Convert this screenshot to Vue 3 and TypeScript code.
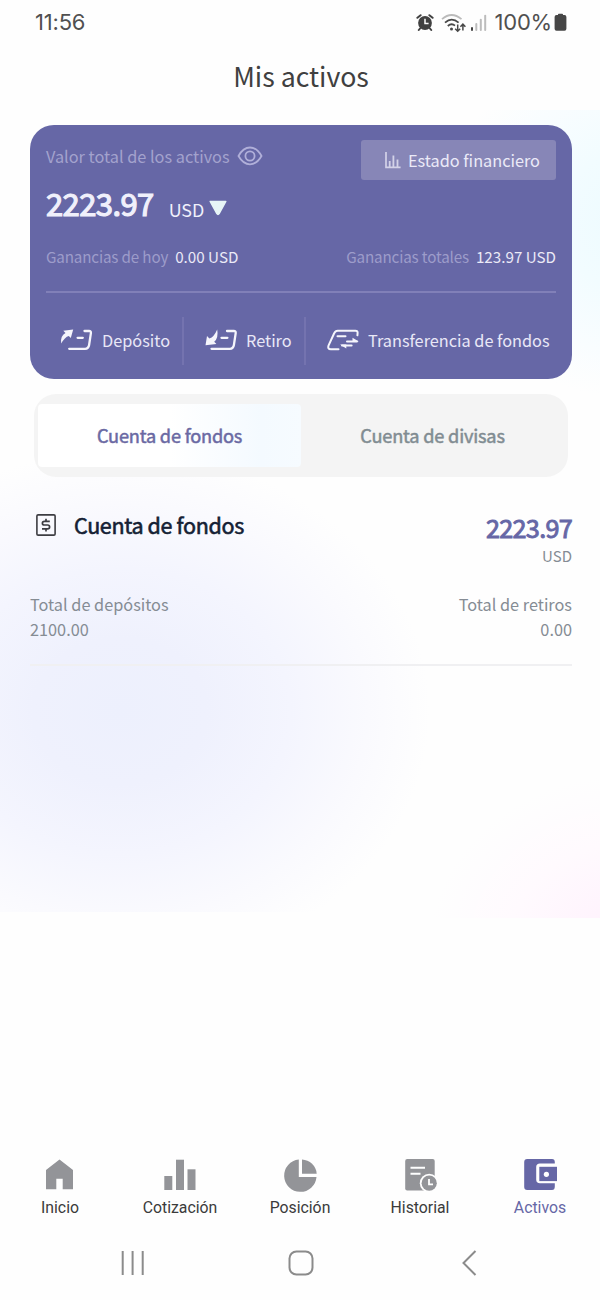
<script setup lang="ts">
interface Tab {
  id: string
  label: string
}

const tabs: Tab[] = [
  { id: 'home', label: 'Inicio' },
  { id: 'quotes', label: 'Cotización' },
  { id: 'position', label: 'Posición' },
  { id: 'history', label: 'Historial' },
  { id: 'assets', label: 'Activos' },
]
const activeTab = 'assets'
</script>

<template>
  <div class="screen">
    <header class="status">
      <span class="clock">11:56</span>
      <div class="indicators">
        <svg class="alarm" width="18" height="19" viewBox="0 0 18 19">
          <circle cx="9" cy="10" r="6.9" fill="#414141" />
          <path d="M1.4 4.8 4.6 2.2M16.6 4.8 13.4 2.2M4 15.5 2.8 17M14 15.5l1.2 1.5" stroke="#414141" stroke-width="2" stroke-linecap="round" />
          <path d="M9 5.8V10.4H12.6" fill="none" stroke="#fff" stroke-width="1.5" />
        </svg>
        <svg class="wifi" width="26" height="20" viewBox="0 0 26 20" fill="none">
          <path d="M1 6.2Q10.5-2.2 20.5 6.2" stroke="#bbb" stroke-width="1.7" />
          <path d="M4 9.6Q10.7 3.6 17.6 9.6" stroke="#484848" stroke-width="1.8" />
          <path d="M6.8 13Q10.5 9.7 14 12.6" stroke="#484848" stroke-width="1.8" />
          <circle cx="10.5" cy="16" r="1.5" fill="#484848" />
          <path d="M16.7 11.5V18M14.2 15.8 16.7 18.3 19.2 15.8M21.9 17.5V11.5M19.4 13.8 21.9 11.2 24.4 13.8" stroke="#484848" stroke-width="1.5" />
        </svg>
        <svg class="signal" width="16" height="18" viewBox="0 0 16 18">
          <rect x="0" y="13" width="2" height="4" rx="1" fill="#444" />
          <rect x="4.3" y="9" width="2" height="8" rx="1" fill="#bcbcbc" />
          <rect x="8.8" y="4.8" width="2" height="12.2" rx="1" fill="#bcbcbc" />
          <rect x="13.2" y="0.8" width="2" height="16.2" rx="1" fill="#bcbcbc" />
        </svg>
        <span class="percent">100%</span>
        <svg class="battery" width="13" height="19" viewBox="0 0 13 19">
          <path d="M4 1.5Q4 .7 4.8.7H8.2Q9 .7 9 1.5V2H10.5Q12.4 2 12.4 4V15.7Q12.4 17.7 10.5 17.7H2.5Q.6 17.7.6 15.7V4Q.6 2 2.5 2H4Z" fill="#464646" />
        </svg>
      </div>
    </header>

    <h1 class="title">Mis activos</h1>

    <main class="content">
      <section class="card">
        <div class="card-head">
          <div class="total-label">
            <span>Valor total de los activos</span>
            <svg width="26" height="20" viewBox="0 0 26 20" fill="none" stroke="#b0afd9" stroke-width="1.8">
              <path d="M1.5 10Q6.2 1.5 13 1.5T24.5 10Q19.8 18.3 13 18.3T1.5 10Z" />
              <circle cx="13" cy="10" r="4.6" />
            </svg>
          </div>
          <button class="statement">
            <svg width="16" height="17" viewBox="0 0 16 17" fill="none" stroke="#d3d2e8">
              <path d="M1 0V15.3H15.6" stroke-width="1.7" />
              <path d="M4.7 9V15M8.4 3.5V15M12.5 7.5V15" stroke-width="1.8" />
            </svg>
            <span>Estado financiero</span>
          </button>
        </div>

        <div class="amount">
          <span class="value">2223.97</span>
          <span class="unit">USD</span>
          <svg width="18" height="16" viewBox="0 0 18 16">
            <path d="M1.2 1.5H16.8L10.1 13.7Q9 15.3 7.9 13.7Z" fill="#e7f5f7" stroke="#e7f5f7" stroke-width="1.5" stroke-linejoin="round" />
          </svg>
        </div>

        <div class="gains">
          <div class="gain"><span class="muted">Ganancias de hoy</span><span class="figure">0.00 USD</span></div>
          <div class="gain"><span class="muted">Ganancias totales</span><span class="figure">123.97 USD</span></div>
        </div>

        <div class="rule"></div>

        <nav class="actions">
          <button class="action deposit">
            <svg width="33" height="22" viewBox="0 0 33 22" fill="none" stroke="#f5f5fc" stroke-width="2.3" stroke-linecap="round" stroke-linejoin="round">
              <path d="M1.2 14.5Q.1 6.8 5.5 4L3.3 1.8 13.2.4 10.8 8.9 8.8 6.9Q4.8 7.9 1.2 14.5Z" fill="#f5f5fc" stroke="none" />
              <path d="M24.5 2H29Q31.2 2 30.9 4.2L29.1 16Q28.5 19.8 25 19.8H9.2M17.6 8.8H22.8" />
            </svg>
            <span>Depósito</span>
          </button>
          <button class="action withdraw">
            <svg width="33" height="22" viewBox="0 0 33 22" fill="none" stroke="#f5f5fc" stroke-width="2.3" stroke-linecap="round" stroke-linejoin="round">
              <path d="M12.2.4Q13.7 8.9 9.2 12.8L11.4 14.9.5 16.2 2 6.9 4.4 9.4Q9 8 12.2.4Z" fill="#f5f5fc" stroke="none" />
              <path d="M22 2H28.8Q31 2 30.7 4.2L28.9 16Q28.3 19.8 24.8 19.8H6.5M16.5 8.8H22.4" />
            </svg>
            <span>Retiro</span>
          </button>
          <button class="action transfer">
            <svg width="33" height="22" viewBox="0 0 33 22" fill="none" stroke="#f5f5fc" stroke-width="2" stroke-linecap="round" stroke-linejoin="round">
              <path d="M30.4 6.3 30.6 4Q30.8 1.7 28.4 1.7H10.7Q8.3 1.7 7.3 4L1.6 16.3Q.3 20.3 3.8 20.3H11.5M10.5 7.3H18.5M20 12.4H30" />
              <path d="M25.5 8.8 31.8 12.6H25.5ZM13 15.6H19.3V19.4Z" fill="#f5f5fc" stroke="none" />
              <path d="M24.6 16.4H15" />
            </svg>
            <span>Transferencia de fondos</span>
          </button>
        </nav>
      </section>

      <section class="switcher">
        <button class="choice selected">Cuenta de fondos</button>
        <button class="choice">Cuenta de divisas</button>
      </section>

      <section class="account">
        <div class="account-head">
          <svg width="20" height="22" viewBox="0 0 20 22" fill="none" stroke="#3d3d42" stroke-width="1.6">
            <rect x=".9" y=".9" width="18.2" height="20.2" rx="1.2" />
            <path d="M13.8 7.4H8.4Q6.4 7.4 6.4 9.2T8.4 11H11.6Q13.6 11 13.6 12.9T11.6 14.8H6M10 4.8V7.4M10 14.8V17.4" stroke-width="1.7" />
          </svg>
          <h2>Cuenta de fondos</h2>
          <div class="balance">
            <strong>2223.97</strong>
            <span>USD</span>
          </div>
        </div>
        <div class="totals">
          <div class="total"><span>Total de depósitos</span><span>2100.00</span></div>
          <div class="total right"><span>Total de retiros</span><span>0.00</span></div>
        </div>
      </section>
    </main>

    <nav class="tabbar">
      <a v-for="tab in tabs" :key="tab.id" class="tab" :class="{ active: tab.id === activeTab }">
        <svg width="36" height="36" viewBox="0 0 36 36" fill="currentColor">
          <path v-if="tab.id === 'home'" d="M17.5 2.5 31 13V32.2H20.7V21.8H14.3V32.2H4V13Z" />
          <g v-else-if="tab.id === 'quotes'">
            <rect x="2.3" y="19" width="8" height="14" />
            <rect x="14" y="2.7" width="8" height="30.3" />
            <rect x="25.5" y="12.3" width="8" height="20.7" />
          </g>
          <g v-else-if="tab.id === 'position'">
            <path d="M16.8 2.5V19.9H34.5A16.2 16.2 0 1 1 16.8 2.5Z" />
            <path d="M20 2.5A15.5 15.5 0 0 1 34.7 16.8H20Z" />
          </g>
          <g v-else-if="tab.id === 'history'">
            <rect x="3.2" y="2" width="29.5" height="31.5" rx="2" />
            <path d="M8.5 10.7H23M8.5 16.7H18.5" stroke="#fff" stroke-width="2" />
            <circle cx="27.2" cy="26.2" r="9.4" fill="#fefefe" />
            <circle cx="27.2" cy="26.2" r="7.6" />
            <path d="M27 22V27.3H31" fill="none" stroke="#fff" stroke-width="1.8" />
          </g>
          <g v-else>
            <path d="M5.2 2H30Q32.8 2 32.8 5V6.5H18Q14.2 6.5 14.2 10V22.5Q14.2 26.3 18 26.3H32.8V29.5Q32.8 33 30 33H5.2Q2.2 33 2.2 30V5Q2.2 2 5.2 2Z" />
            <rect x="17.3" y="9.8" width="17.7" height="14.3" />
            <circle cx="24.4" cy="17.3" r="2.6" fill="#fff" />
          </g>
        </svg>
        <span>{{ tab.label }}</span>
      </a>
    </nav>

    <footer class="system">
      <svg width="26" height="26" viewBox="0 0 26 26" stroke="#8b8b8b" stroke-width="2"><path d="M2.7 1V25M12.6 1V25M22.7 1V25" /></svg>
      <svg width="26" height="26" viewBox="0 0 26 26" fill="none" stroke="#8b8b8b" stroke-width="2"><rect x="1.5" y="1.5" width="23" height="23" rx="7" /></svg>
      <svg width="26" height="26" viewBox="0 0 26 26" fill="none" stroke="#8b8b8b" stroke-width="2"><path d="M19.5 1 7.5 13 19.5 25" /></svg>
    </footer>
  </div>
</template>

<style>
body {
  margin: 0;
  background: #fefefe;
}
</style>

<style scoped>
.screen {
  box-sizing: border-box;
  display: flex;
  flex-direction: column;
  width: 600px;
  height: 1300px;
  overflow: hidden;
  font-family: "Noto Sans CJK SC", "Noto Sans", sans-serif;
  white-space: nowrap;
  background:
    radial-gradient(ellipse 200px 170px at 630px 945px, #fff1fc 0%, #fff4fd 25%, #fffafe 60%, #fefefe00 100%) 0 0 / 600px 918px no-repeat,
    radial-gradient(ellipse 310px 260px at 120px 711px, #edf0fd 0%, #eff1fd 28%, #f4f5fe 55%, #fafafe 80%, #fefefe00 100%) 0 0 / 600px 912px no-repeat,
    radial-gradient(ellipse 200px 180px at 640px 110px, #edfbff 0%, #f2fcff 40%, #f9fdff 75%, #fefefe00 100%) 0 110px / 600px 290px no-repeat,
    #fefefe;
}
.screen > * {
  box-sizing: border-box;
  flex-shrink: 0;
}
button {
  padding: 0;
  border: 0;
  background: none;
  font: inherit;
  color: inherit;
}
svg {
  display: block;
  flex: none;
}
.status {
  display: flex;
  justify-content: space-between;
  height: 45px;
  padding: 0 33px 0 35px;
  align-items: center;
  color: #505050;
  font: 22px/45px Inter, sans-serif;
}
.clock {
  letter-spacing: -0.2px;
}
.indicators {
  display: flex;
  align-items: center;
}
.wifi { margin-left: 7px; }
.signal { margin-left: 4px; }
.percent { margin-left: 7px; letter-spacing: -0.2px; }
.battery { margin-left: 2px; }
.title {
  margin: 0;
  height: 80px;
  padding-left: 2px;
  font-size: 26.7px;
  line-height: 62px;
  font-weight: 400;
  text-align: center;
  color: #404040;
}
.content {
  display: flex;
  flex-direction: column;
  height: 1027px;
  padding: 0 28px 0 30px;
}
.card {
  box-sizing: border-box;
  height: 254px;
  padding: 15px 16px 0;
  border-radius: 24px;
  background: #6667a6;
}
.card-head {
  display: flex;
  justify-content: space-between;
  height: 40px;
}
.total-label {
  display: flex;
  gap: 7px;
  height: 32px;
  align-items: center;
  font-size: 16.3px;
  color: #a3a2cd;
}
.total-label svg { margin-top: -1px; }
.statement {
  display: flex;
  align-items: center;
  gap: 7px;
  box-sizing: border-box;
  width: 195px;
  height: 40px;
  padding-left: 24px;
  border-radius: 3px;
  background: #8786b7;
  font-size: 16.3px;
  color: #ebeaf7;
}
.amount {
  display: flex;
  align-items: center;
  height: 50px;
  color: #f0f0fb;
}
.value {
  margin-top: -4px;
  font-size: 31px;
  line-height: 50px;
  letter-spacing: -0.6px;
  -webkit-text-stroke: 1.2px currentColor;
}
.unit {
  margin: 8px 5px 0 15px;
  font-size: 17.9px;
}
.amount svg { margin-top: 6px; }
.gains {
  display: flex;
  justify-content: space-between;
  height: 61px;
  line-height: 52px;
  font-size: 15.2px;
}
.gain {
  display: flex;
  gap: 7px;
}
.muted { color: #9d9cca; letter-spacing: -0.15px; }
.figure { color: #ebeaf7; }
.rule {
  height: 2px;
  background: #8180b8;
}
.actions {
  display: flex;
  height: 48px;
  margin-top: 24px;
  color: #e9e8f7;
  font-size: 16.3px;
}
.action {
  display: flex;
  align-items: center;
  box-sizing: border-box;
}
.action svg,
.action span { margin-top: -2px; }
.deposit {
  width: 138px;
  padding-left: 14px;
  gap: 9px;
  border-right: 2px solid #7473af;
}
.withdraw {
  width: 122px;
  padding-left: 21px;
  gap: 8px;
  border-right: 2px solid #7473af;
}
.transfer {
  padding-left: 21px;
  gap: 8px;
}
.switcher {
  display: flex;
  box-sizing: border-box;
  width: 534px;
  height: 83px;
  margin: 15px 0 0 4px;
  padding: 10px 4px;
  border-radius: 22px;
  background: #f4f4f4;
}
.choice {
  width: 264px;
  padding-bottom: 2px;
  font-size: 18.2px;
  letter-spacing: -0.2px;
  -webkit-text-stroke: 0.5px currentColor;
  color: #818c92;
}
.choice.selected {
  border-radius: 4px;
  background: linear-gradient(90deg, #fff 50%, #f4faff 85%, #f6fbff);
  color: #6a69a3;
}
.account {
  height: 187px;
  border-bottom: 2px solid #f0f0f2;
  color: #858c94;
  font-size: 16.3px;
}
.account-head {
  display: flex;
  height: 115px;
  padding: 0 0 0 6px;
}
.account-head svg { margin-top: 37px; }
h2 {
  margin: 25px 0 0 18px;
  font-size: 21.5px;
  line-height: 46px;
  font-weight: 400;
  letter-spacing: -0.35px;
  color: #151f35;
  -webkit-text-stroke: 0.6px currentColor;
}
.balance {
  display: flex;
  flex-direction: column;
  align-items: flex-end;
  margin: 33px 0 0 auto;
}
.balance strong {
  height: 34px;
  font-size: 25.2px;
  line-height: 34px;
  font-weight: 400;
  letter-spacing: -0.7px;
  color: #6667a6;
  -webkit-text-stroke: 0.9px currentColor;
}
.balance span {
  font-size: 15px;
  line-height: 24px;
}
.totals {
  display: flex;
  justify-content: space-between;
}
.total {
  display: flex;
  flex-direction: column;
  line-height: 25px;
}
.right { text-align: right; }
.tabbar {
  display: flex;
  height: 69px;
  padding-top: 5px;
  font: 15.8px/24px Roboto, sans-serif;
}
.tab {
  display: flex;
  flex-direction: column;
  align-items: center;
  width: 120px;
  gap: 3px;
  color: #939498;
}
.tab span { color: #3b3b3b; }
.tab.active,
.tab.active span { color: #6667a6; }
.system {
  display: flex;
  justify-content: space-between;
  height: 79px;
  padding: 29px 118px 0 120px;
}
</style>
